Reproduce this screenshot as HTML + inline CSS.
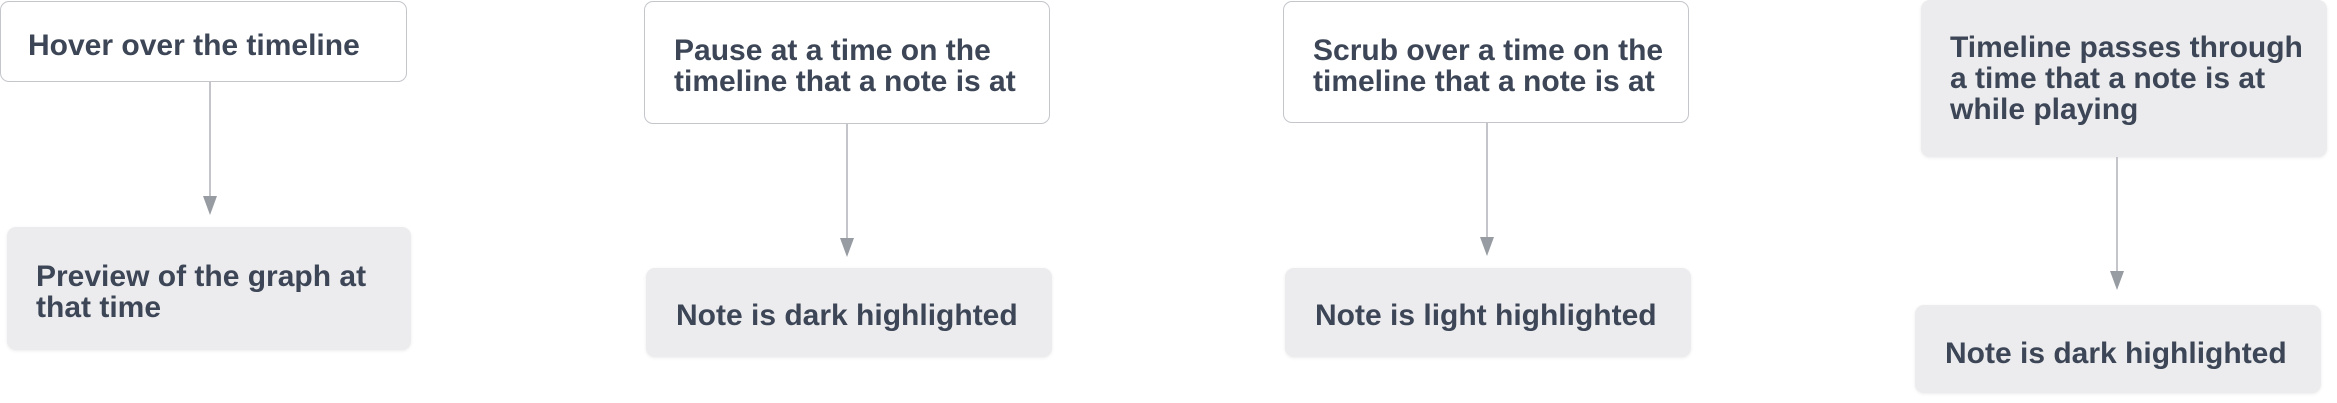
<!DOCTYPE html>
<html><head><meta charset="utf-8"><style>
html,body{margin:0;padding:0;background:#fff;width:2337px;height:403px;overflow:hidden;position:relative}
.b{position:absolute;box-sizing:border-box;border-radius:9px}
.w{background:#fff;border:1.5px solid #c4c6cb}
.g{background:#ececee;box-shadow:0 1px 3px rgba(0,0,0,0.08)}
.t{position:absolute;font-family:"Liberation Sans",sans-serif;font-weight:bold;font-size:30px;line-height:31px;color:#3c4656;white-space:nowrap;letter-spacing:0}
.l{position:absolute;width:2px;background:#c3c5ca}
.a{position:absolute;width:0;height:0;border-left:7px solid transparent;border-right:7px solid transparent;border-top:19px solid #979ca3}
</style></head><body>
<div class="b w" style="left:0;top:1px;width:407px;height:81px"></div>
<div class="t" style="left:28px;top:30px">Hover over the timeline</div>
<div class="l" style="left:209px;top:82px;height:116px"></div>
<div class="a" style="left:203px;top:196px"></div>
<div class="b g" style="left:7px;top:227px;width:404px;height:123px"></div>
<div class="t" style="left:36px;top:261px">Preview of the graph at<br>that time</div>

<div class="b w" style="left:644px;top:1px;width:406px;height:123px"></div>
<div class="t" style="left:674px;top:35px">Pause at a time on the<br>timeline that a note is at</div>
<div class="l" style="left:846px;top:124px;height:116px"></div>
<div class="a" style="left:840px;top:238px"></div>
<div class="b g" style="left:646px;top:268px;width:406px;height:89px"></div>
<div class="t" style="left:676px;top:300px">Note is dark highlighted</div>

<div class="b w" style="left:1283px;top:1px;width:406px;height:122px"></div>
<div class="t" style="left:1313px;top:35px">Scrub over a time on the<br>timeline that a note is at</div>
<div class="l" style="left:1486px;top:123px;height:116px"></div>
<div class="a" style="left:1480px;top:237px"></div>
<div class="b g" style="left:1285px;top:268px;width:406px;height:89px"></div>
<div class="t" style="left:1315px;top:300px">Note is light highlighted</div>

<div class="b g" style="left:1921px;top:0;width:406px;height:157px"></div>
<div class="t" style="left:1950px;top:32px">Timeline passes through<br>a time that a note is at<br>while playing</div>
<div class="l" style="left:2116px;top:157px;height:116px"></div>
<div class="a" style="left:2110px;top:271px"></div>
<div class="b g" style="left:1915px;top:305px;width:406px;height:88px"></div>
<div class="t" style="left:1945px;top:338px">Note is dark highlighted</div>
</body></html>
